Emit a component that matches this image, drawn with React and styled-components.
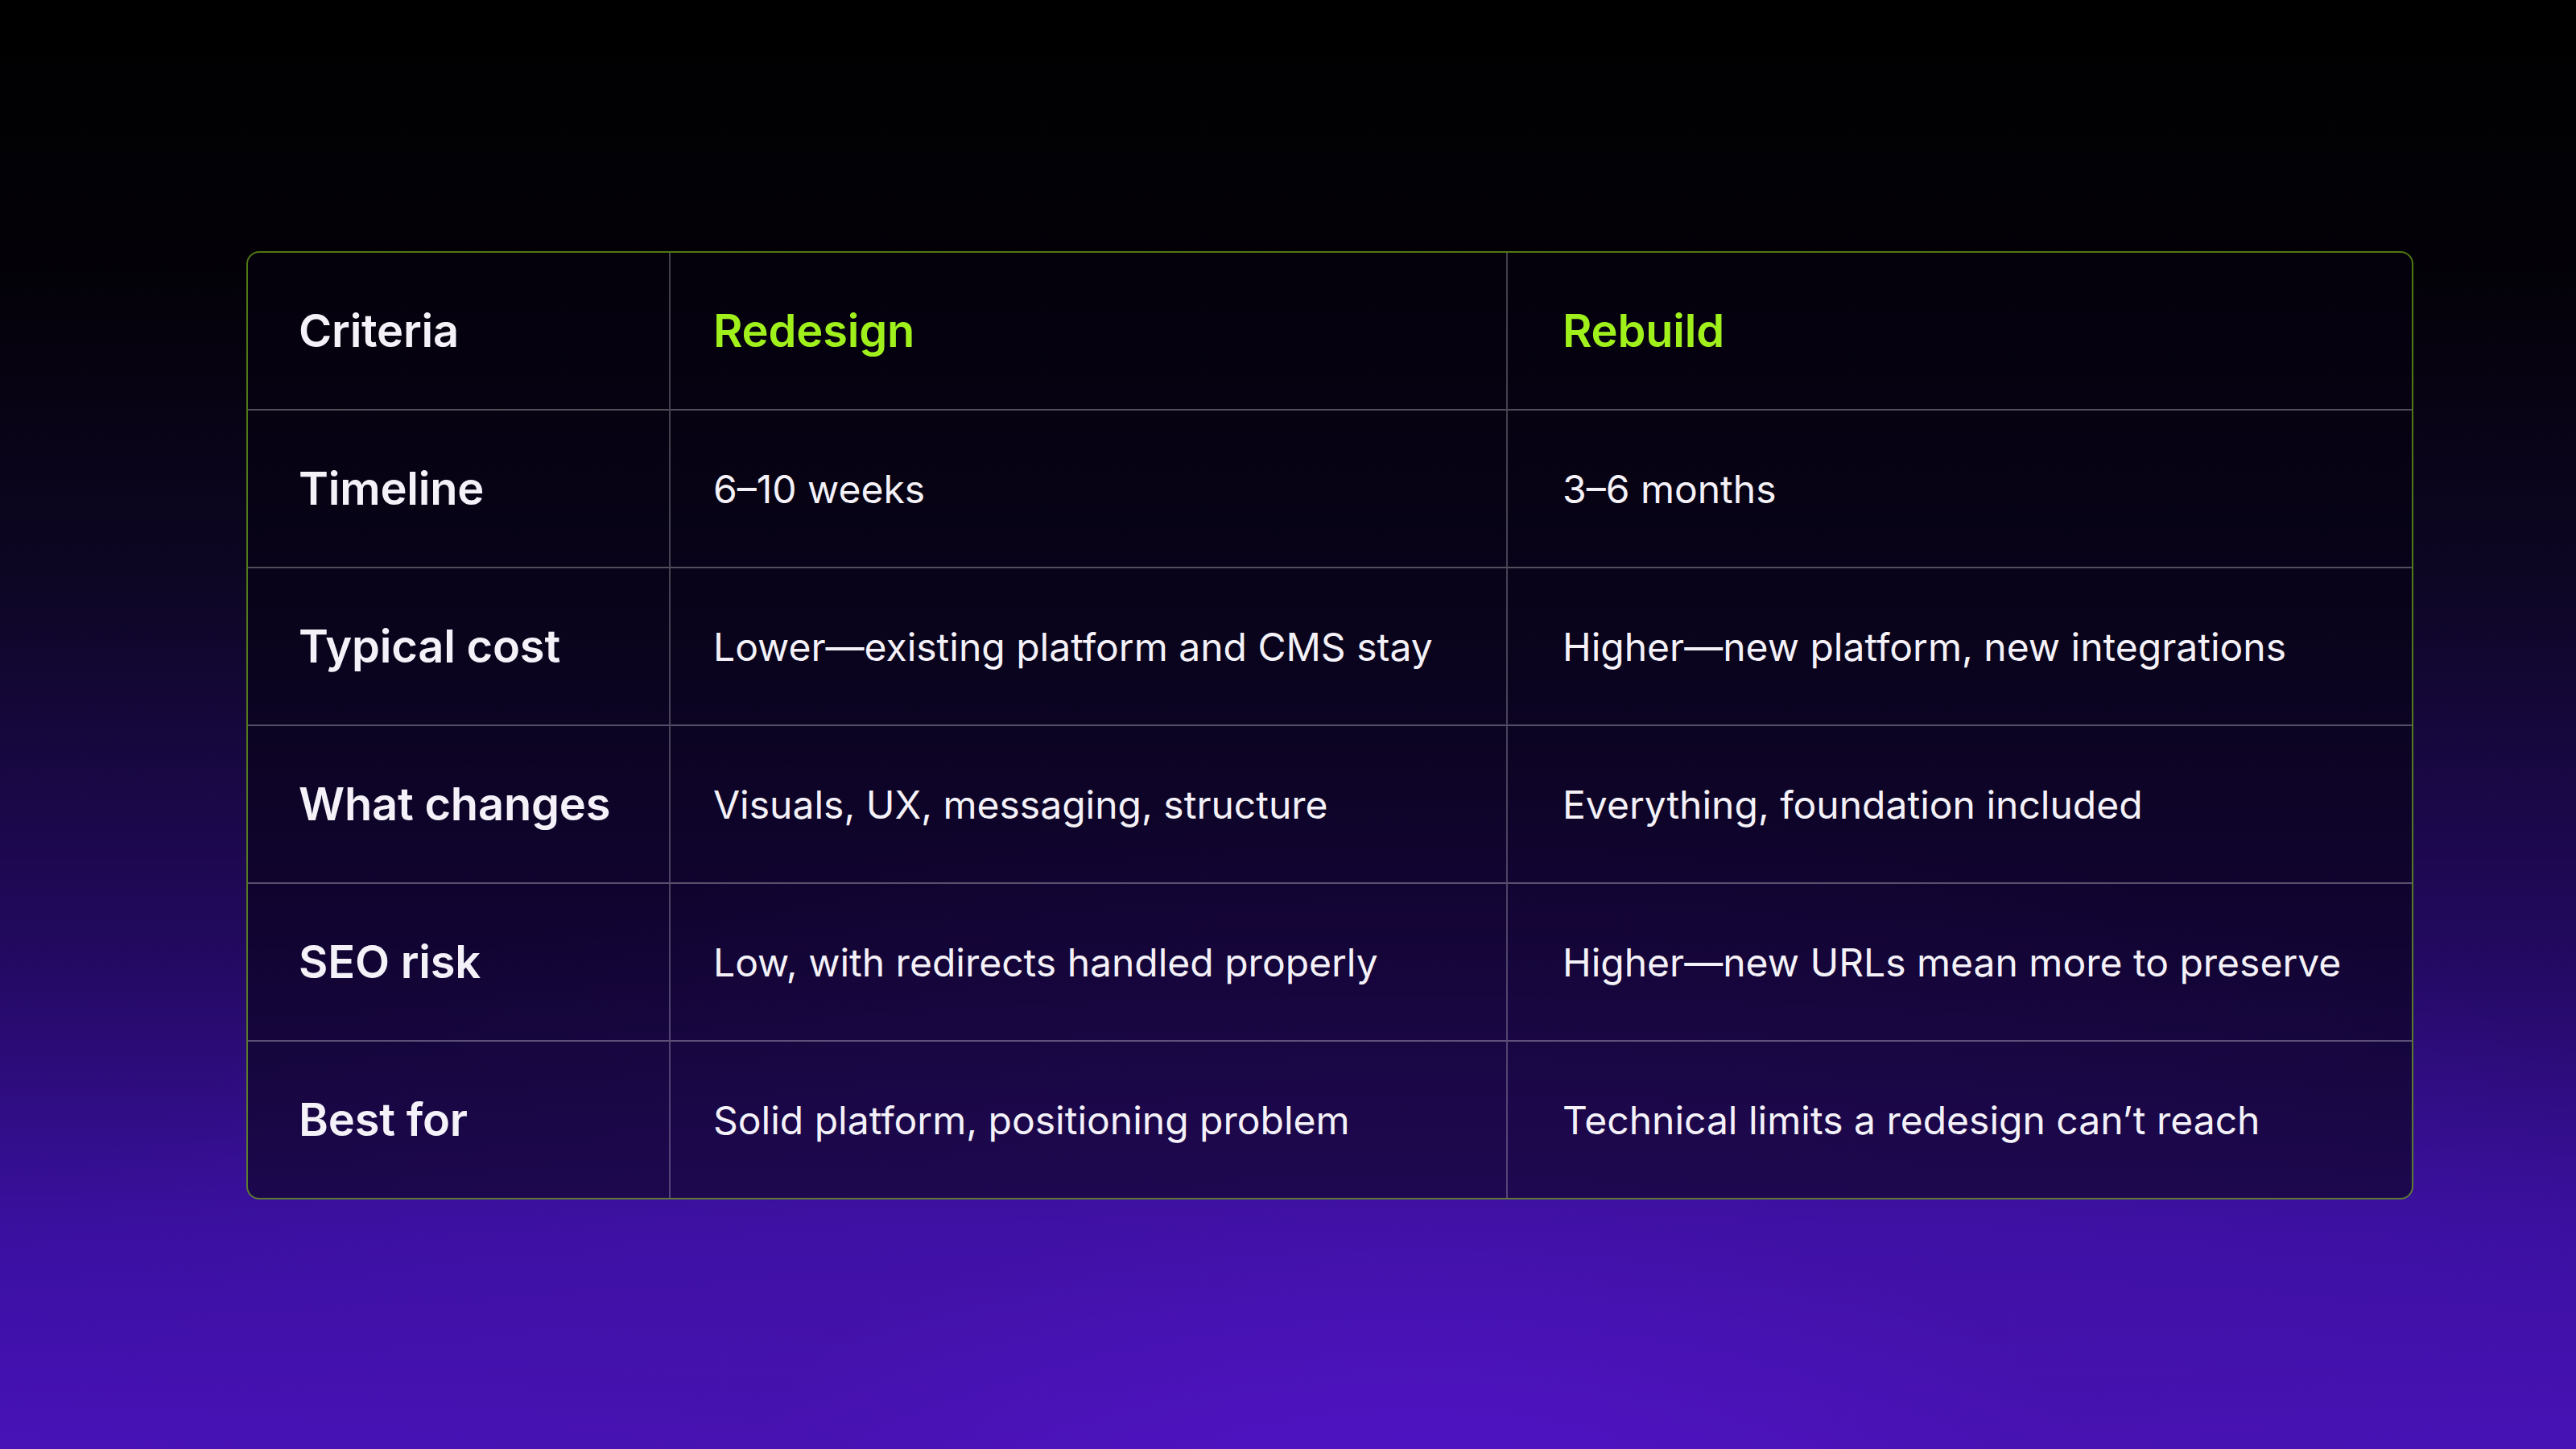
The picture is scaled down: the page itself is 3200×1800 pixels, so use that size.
import styled, { createGlobalStyle } from "styled-components";

const GlobalStyle = createGlobalStyle`
  html, body {
    margin: 0;
    padding: 0;
    background: #000;
  }
  * {
    box-sizing: border-box;
  }
`;

const Page = styled.div`
  width: 3200px;
  height: 1800px;
  overflow: hidden;
  padding: 312px 0 0 306px;
  font-family: Inter, "Noto Sans", sans-serif;
  background:
    radial-gradient(ellipse 1900px 900px at 55% 105%, rgba(82, 20, 200, 0.85) 0%, rgba(70, 18, 170, 0.5) 45%, rgba(40, 10, 100, 0) 100%),
    linear-gradient(180deg, #000 0%, #030107 18%, #0d0624 40%, #22095e 65%, #3a10a0 85%, #4812b8 100%);
`;

const Table = styled.div`
  width: 2692px;
  display: grid;
  grid-template-columns: 523px 1040px 1fr;
  border: 2px solid rgba(158, 240, 26, 0.5);
  border-radius: 16px;
  background: rgba(6, 2, 16, 0.56);
  overflow: hidden;
`;

const Cell = styled.div`
  height: ${(p) => (p.$last ? 194 : 196)}px;
  display: flex;
  align-items: center;
  padding-left: ${(p) => p.$pad}px;
  border-bottom: ${(p) => (p.$last ? "none" : "2px solid rgba(255, 255, 255, 0.3)")};
  border-left: ${(p) => (p.$first ? "none" : "2px solid rgba(255, 255, 255, 0.25)")};
  color: ${(p) => (p.$accent ? "#a0f01c" : "#f4f2f8")};
  font-size: ${(p) => (p.$bold ? 56 : 48)}px;
  font-weight: ${(p) => (p.$bold ? 600 : 400)};
  letter-spacing: ${(p) => (p.$bold ? "-0.2px" : "0")};
  white-space: nowrap;
`;

const rows = [
  ["Timeline", "6–10 weeks", "3–6 months"],
  ["Typical cost", "Lower—existing platform and CMS stay", "Higher—new platform, new integrations"],
  ["What changes", "Visuals, UX, messaging, structure", "Everything, foundation included"],
  ["SEO risk", "Low, with redirects handled properly", "Higher—new URLs mean more to preserve"],
  ["Best for", "Solid platform, positioning problem", "Technical limits a redesign can’t reach"],
];

const pads = [63, 53, 68];

export default function App() {
  return (
    <Page>
      <GlobalStyle />
      <Table>
        <Cell $first $bold $pad={pads[0]}>Criteria</Cell>
        <Cell $bold $accent $pad={pads[1]}>Redesign</Cell>
        <Cell $bold $accent $pad={pads[2]}>Rebuild</Cell>
        {rows.map((r, i) => {
          const last = i === rows.length - 1;
          return [
            <Cell key={i + "a"} $first $bold $last={last} $pad={pads[0]}>{r[0]}</Cell>,
            <Cell key={i + "b"} $last={last} $pad={pads[1]}>{r[1]}</Cell>,
            <Cell key={i + "c"} $last={last} $pad={pads[2]}>{r[2]}</Cell>,
          ];
        })}
      </Table>
    </Page>
  );
}
